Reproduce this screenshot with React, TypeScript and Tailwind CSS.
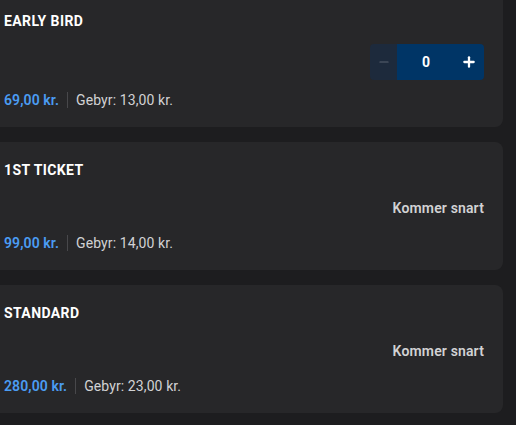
import { Minus, Plus } from "lucide-react";

type Ticket = {
  name: string;
  price: string;
  fee: string;
  onSale: boolean;
};

const tickets: Ticket[] = [
  { name: "Early Bird", price: "69,00 kr.", fee: "13,00 kr.", onSale: true },
  { name: "1st Ticket", price: "99,00 kr.", fee: "14,00 kr.", onSale: false },
  { name: "Standard", price: "280,00 kr.", fee: "23,00 kr.", onSale: false },
];

function Counter() {
  return (
    <div className="flex h-9 w-[114px] overflow-hidden rounded">
      <button className="flex w-[27px] items-center justify-center bg-[#1d2a3c] text-[#5b6270]">
        <Minus className="h-3.5 w-3.5" strokeWidth={2} />
      </button>
      <div className="flex flex-1 items-center bg-[#003566]">
        <span className="flex-1 pl-[1px] text-center text-sm font-bold text-white">
          0
        </span>
        <button className="flex w-[30px] items-center justify-center text-white">
          <Plus className="h-4 w-4" strokeWidth={3.4} />
        </button>
      </div>
    </div>
  );
}

export default function App() {
  return (
    <div
      className="flex min-h-screen flex-col bg-[#1d1d1f] pr-[13px]"
      style={{ fontFamily: "Roboto, 'Noto Sans', sans-serif" }}
    >
      <div className="-ml-3 -mt-[7px] flex flex-col gap-[15px]">
        {tickets.map((t) => (
          <div
            key={t.name}
            className="flex flex-col rounded-lg bg-[#272729] pb-[17px] pl-4 pr-[19px] pt-[18px]"
          >
            <h3 className="text-sm font-bold uppercase leading-5 tracking-[0.4px] text-white">
              {t.name}
            </h3>

            {t.onSale ? (
              <div className="mt-[13px] flex justify-end">
                <Counter />
              </div>
            ) : (
              <div className="mt-[18px] flex justify-end">
                <span className="text-sm font-semibold leading-5 tracking-[0.15px] text-[#d2d2d4]">
                  Kommer snart
                </span>
              </div>
            )}

            <div
              className={`flex items-center text-sm leading-5 tracking-[0.1px] ${
                t.onSale ? "mt-[10px]" : "mt-[15px]"
              }`}
            >
              <span className="font-semibold text-[#4b9cf2]">{t.price}</span>
              <span className="mx-2 h-4 w-px bg-[#48484b]" />
              <span className="text-[#d2d2d4]">Gebyr: {t.fee}</span>
            </div>
          </div>
        ))}
      </div>
    </div>
  );
}
